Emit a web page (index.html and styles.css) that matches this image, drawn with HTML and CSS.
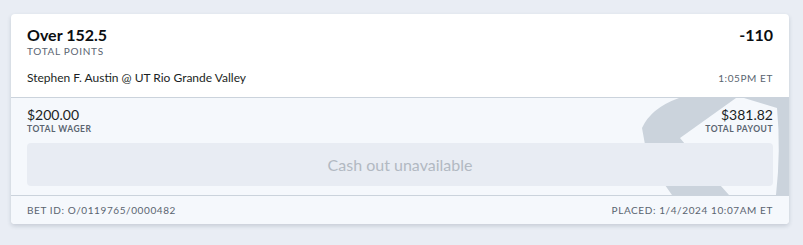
FILE: index.html
```html
<!DOCTYPE html>
<html>
<head>
<meta charset="utf-8">
<link rel="stylesheet" href="styles.css">
</head>
<body>
<div class="page">
  <div class="card">
    <div class="head">
      <div class="row">
        <div class="sel">Over 152.5</div>
        <div class="odds">-110</div>
      </div>
      <div class="market">TOTAL POINTS</div>
      <div class="row event-row">
        <div class="event">Stephen F. Austin @ UT Rio Grande Valley</div>
        <div class="time">1:05PM ET</div>
      </div>
    </div>
    <div class="mid">
      <svg class="mark" width="160" height="97" viewBox="630 98 160 97" aria-hidden="true">
        <path d="M680,98 Q652,108 643,128 L647,150 Q658,175 673,195 L730,195 Q705,168 681,138 L737,98 Z" fill="#cbd3dc"/>
        <path d="M745,98 L790,98 L790,195 L777,195 Q782,150 778,108 Z" fill="#cbd3dc"/>
      </svg>
      <div class="row amounts">
        <div class="amt">
          <div class="val">$200.00</div>
          <div class="lbl">TOTAL WAGER</div>
        </div>
        <div class="amt right">
          <div class="val">$381.82</div>
          <div class="lbl">TOTAL PAYOUT</div>
        </div>
      </div>
      <div class="cash">Cash out unavailable</div>
    </div>
    <div class="foot">
      <div>BET ID: O/0119765/0000482</div>
      <div>PLACED: 1/4/2024 10:07AM ET</div>
    </div>
  </div>
</div>
</body>
</html>
```
FILE: styles.css
```css
* { box-sizing: border-box; }
html, body { margin: 0; padding: 0; }
body {
  background: #e9edf4;
  font-family: "Lato", "Open Sans", sans-serif;
  color: #111418;
  width: 803px;
  height: 245px;
  overflow: hidden;
}
.page {
  padding: 14px 14px 0 11px;
}
.card {
  width: 778px;
  background: #ffffff;
  border-radius: 4px;
  box-shadow: 0 2px 4px rgba(40, 55, 80, 0.18);
  overflow: hidden;
}
.row {
  display: flex;
  justify-content: space-between;
  align-items: baseline;
}
.head {
  padding: 11px 16px 11px 16px;
  border-bottom: 1px solid #cbd3dc;
  height: 84px;
}
.sel, .odds {
  font-size: 16px;
  font-weight: 700;
  line-height: 20px;
  color: #0b0e12;
}
.market {
  margin-top: 0;
  font-size: 10px;
  letter-spacing: 0.7px;
  color: #5a6470;
  line-height: 12px;
}
.event-row { margin-top: 14px; }
.event {
  font-size: 12px;
  color: #1b1f24;
  line-height: 14px;
}
.time {
  font-size: 10px;
  letter-spacing: 0.6px;
  color: #5a6470;
}
.mid {
  position: relative;
  background: #f5f8fc;
  padding: 9px 16px 8px 16px;
  border-bottom: 1px solid #cbd3dc;
  height: 98px;
}
.mark {
  position: absolute;
  right: 0;
  top: 0;
}
.amounts { position: relative; }
.amt .val {
  font-size: 14px;
  line-height: 16px;
  color: #1b1f24;
}
.amt .lbl {
  margin-top: 1px;
  font-size: 8.5px;
  font-weight: 700;
  letter-spacing: 0.5px;
  color: #5a6470;
  line-height: 10px;
}
.amt.right { text-align: right; }
.cash {
  position: relative;
  margin-top: 9px;
  height: 43px;
  border-radius: 4px;
  background: #e8ecf3;
  color: #b2b9c2;
  font-size: 16px;
  display: flex;
  align-items: center;
  justify-content: center;
}
.foot {
  background: #f5f8fc;
  display: flex;
  justify-content: space-between;
  padding: 0 16px;
  height: 28px;
  align-items: center;
  font-size: 10px;
  letter-spacing: 0.6px;
  color: #5a6470;
}
```
